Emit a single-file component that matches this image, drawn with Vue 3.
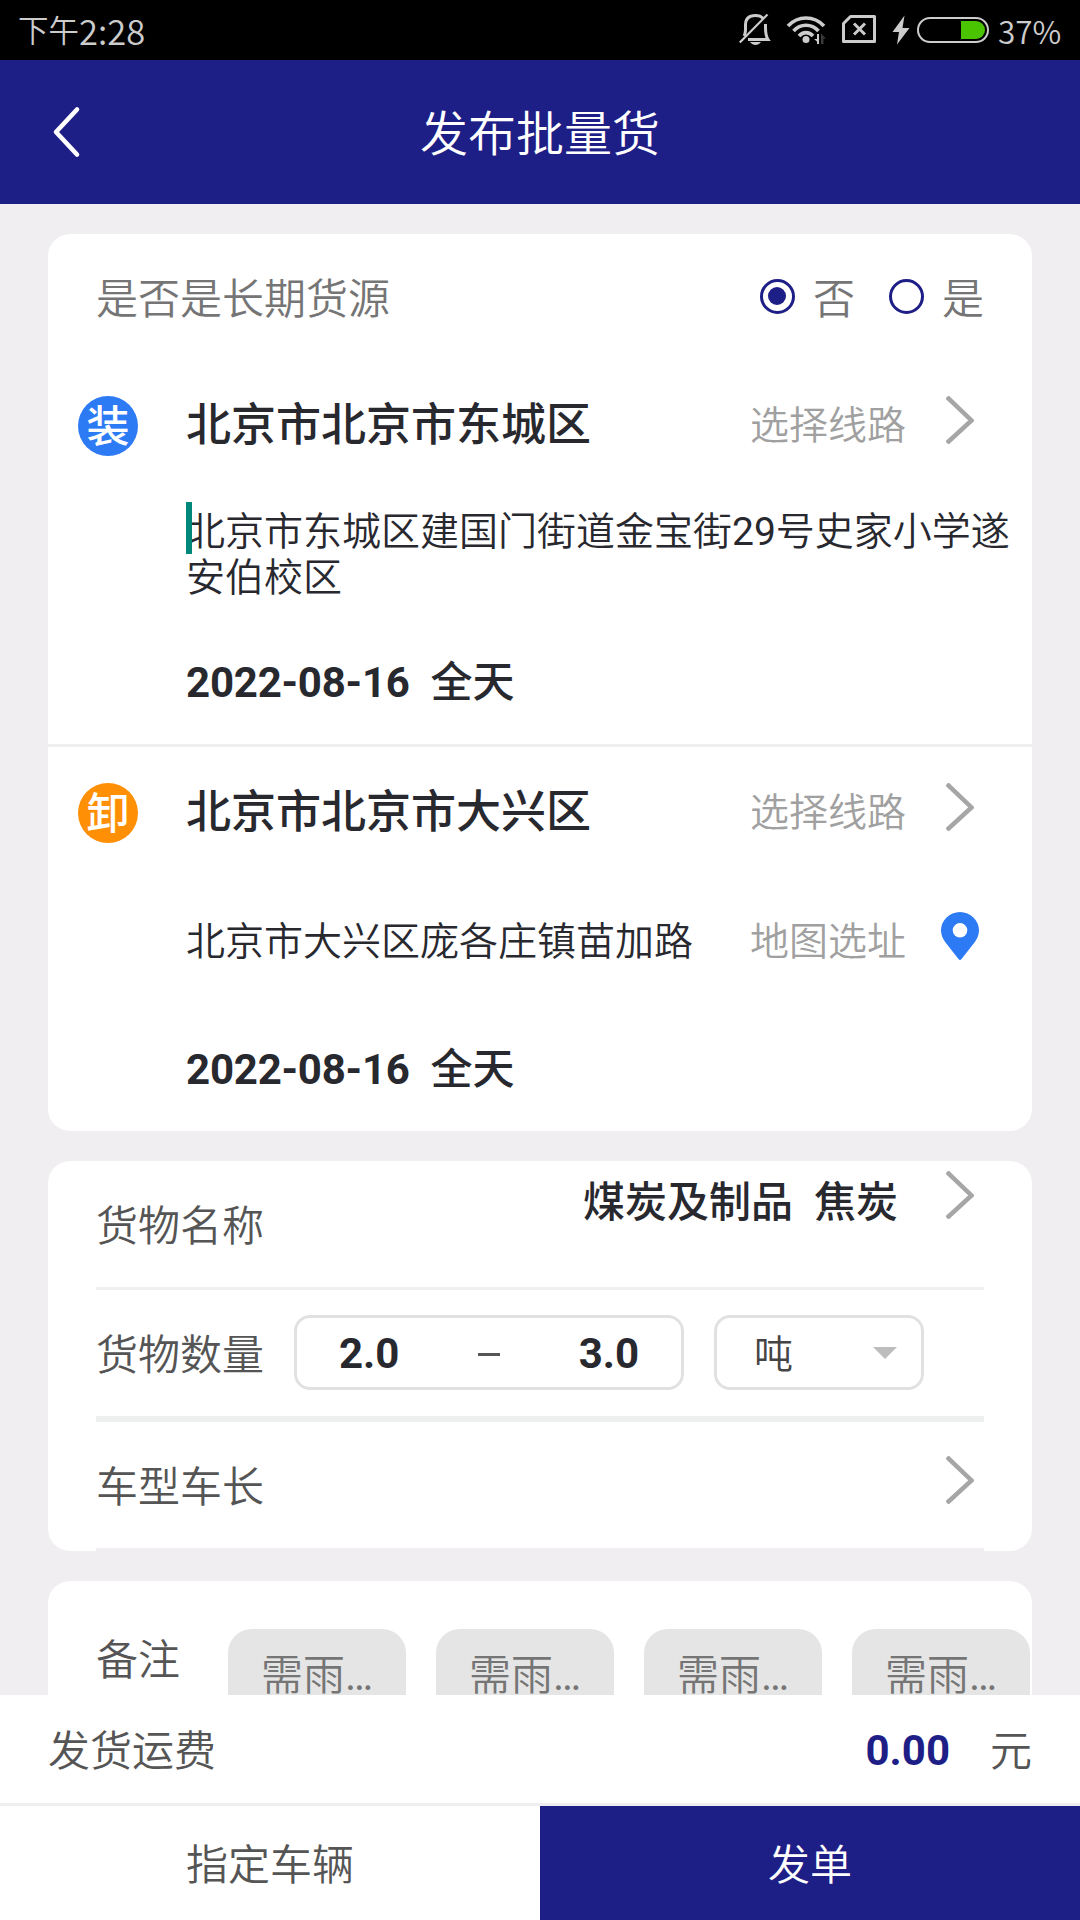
<template>
    <div class="page">
        <div class="status-bar">
            <div class="time"><span>下午</span><span class="digits">2:28</span></div>
            <svg class="status-icons" width="256" height="60" viewBox="736 0 256 60" fill="none">
                <g stroke="#cccccc" stroke-width="3">
                    <path d="M744 36 C746 33 745.500 29 745.500 25 C745.500 19 749 15.500 755.500 15.500 C759 15.500 761.500 16.500 763 18.500" />
                    <path d="M765.500 24 C765.500 31 765 35 768 39.500 H748" />
                    <path d="M739.800 42.500 L767.500 14.500" stroke-width="2.200" />
                </g>
                <path d="M750 42 H761 C759.500 44 757.500 45 755.500 45 C753.500 45 751.500 44 750 42 Z" fill="#cccccc" />
                <g stroke="#cccccc" stroke-width="3.600">
                    <path d="M788 26 C798 15.300 814 15.300 824 26" />
                    <path d="M793.500 31 C800.500 23.300 811.500 23.300 818.500 31" />
                    <path d="M799 36 C803 31.500 809 31.500 813 36" />
                </g>
                <circle cx="806" cy="39.500" r="3.500" fill="#cccccc" />
                <path d="M819 34 V44 H817 V41.500 L814 39 H817 V34 Z" fill="#cccccc" />
                <path d="M821 44 V33.500 L826 38.500 H823.500 V44 Z" fill="#383838" />
                <path d="M850.500 16.500 H874.500 V41.500 H843.500 V23.500 Z" stroke="#cccccc" stroke-width="3" stroke-linejoin="round" />
                <path d="M854 23.500 L865 34.500 M865 23.500 L854 34.500" stroke="#cccccc" stroke-width="3" />
                <path d="M904.500 15.500 L892.500 32 H899 L897 44.500 L909.500 28 H902.500 Z" fill="#cccccc" />
                <rect x="918" y="18" width="70" height="24" rx="12" stroke="#cccccc" stroke-width="2" />
                <path d="M961 21 H976 A9 9 0 0 1 976 39 H961 Z" fill="#4ac400" />
            </svg>
            <span class="digits percent">37%</span>
        </div>

        <header class="nav">
            <svg class="back" width="30" height="52" viewBox="0 0 30 52">
                <path d="M25 3.500 L4 26 L25 48.500" fill="none" stroke="#fff" stroke-width="4.600" stroke-linecap="round" stroke-linejoin="round" />
            </svg>
            <h1>发布批量货</h1>
        </header>

        <main class="content">
            <section class="card">
                <div class="long-term">
                    <span class="long-label">是否是长期货源</span>
                    <label v-for="item in options" :key="item" class="option" @click="longTerm = item">
                        <i class="radio" :class="{ checked: longTerm === item }"></i>
                        <span>{{ item }}</span>
                    </label>
                </div>

                <div v-for="stop in stops" :key="stop.tag" class="stop">
                    <div class="stop-head">
                        <span class="tag" :class="stop.type">{{ stop.tag }}</span>
                        <span class="region">{{ stop.region }}</span>
                        <span class="link">选择线路</span>
                        <svg class="arrow" width="28" height="48" viewBox="0 0 28 48">
                            <path d="M1 1 L25.500 24.500 L1 47" />
                        </svg>
                    </div>
                    <div class="stop-address">
                        <p class="address">
                            <i v-if="stop.focused" class="caret"></i><span v-for="(part, i) in splitNumbers(stop.address)" :key="i" :class="{ number: i % 2 }">{{ part }}</span>
                        </p>
                        <template v-if="stop.showMap">
                            <span class="link">地图选址</span>
                            <svg class="pin" width="38" height="48" viewBox="0 0 38 48">
                                <path fill="#2d7bf4" fill-rule="evenodd" d="M19 0 C29.500 0 38 8.300 38 18.500 C38 23 36 27 33.500 30.500 L20.500 47 Q19 49 17.500 47 L4.500 30.500 C2 27 0 23 0 18.500 C0 8.300 8.500 0 19 0 Z M19 11 A7.300 7.300 0 1 0 19 25.600 A7.300 7.300 0 1 0 19 11 Z" />
                            </svg>
                        </template>
                    </div>
                    <div class="stop-date"><b>{{ stop.date }}</b>{{ '  ' + stop.period }}</div>
                </div>
            </section>

            <section class="card goods">
                <div class="row">
                    <span class="label">货物名称</span>
                    <div class="goods-name">
                        <span>{{ '煤炭及制品  焦炭' }}</span>
                        <svg class="arrow" width="28" height="48" viewBox="0 0 28 48">
                            <path d="M1 1 L25.500 24.500 L1 47" />
                        </svg>
                    </div>
                </div>
                <div class="row amount-row">
                    <span class="label">货物数量</span>
                    <div class="range">
                        <b>2.0</b>
                        <i class="dash"></i>
                        <b>3.0</b>
                    </div>
                    <div class="unit">
                        <span>吨</span>
                        <i class="triangle"></i>
                    </div>
                </div>
                <div class="row truck-row">
                    <span class="label">车型车长</span>
                    <svg class="arrow" width="28" height="48" viewBox="0 0 28 48">
                        <path d="M1 1 L25.500 24.500 L1 47" />
                    </svg>
                </div>
            </section>

            <section class="card remark">
                <span class="label">备注</span>
                <div class="chips">
                    <span v-for="n in 4" :key="n" class="chip">需雨<span class="number">…</span></span>
                </div>
            </section>
        </main>

        <footer class="footer">
            <div class="fee">
                <span>发货运费</span>
                <b>0.00</b>
                <span>元</span>
            </div>
            <div class="actions">
                <button class="btn">指定车辆</button>
                <button class="btn btn-primary">发单</button>
            </div>
        </footer>
    </div>
</template>

<script setup>
import { ref } from 'vue'

const options = ['否', '是']
const longTerm = ref('否')

const stops = [
    {
        tag: '装',
        type: 'load',
        region: '北京市北京市东城区',
        address: '北京市东城区建国门街道金宝街29号史家小学遂安伯校区',
        date: '2022-08-16',
        period: '全天',
        focused: true,
        showMap: false
    },
    {
        tag: '卸',
        type: 'unload',
        region: '北京市北京市大兴区',
        address: '北京市大兴区庞各庄镇苗加路',
        date: '2022-08-16',
        period: '全天',
        focused: false,
        showMap: true
    }
]

// odd items are the numbers
const splitNumbers = (text) => text.split(/(\d+)/)
</script>

<style>
body {
    margin: 0;
    background: #f0eef1;
}
</style>

<style scoped>
.page {
    width: 1080px;
    height: 1920px;
    display: flex;
    flex-direction: column;
    overflow: hidden;
    background: #f0eef1;
    font-family: Roboto, 'Noto Sans CJK SC', sans-serif;
    font-size: 42px;
    font-weight: 350;
    line-height: 1.2;
    color: #555;
}

.page * {
    box-sizing: border-box;
}

.page svg {
    flex: none;
}

.status-bar {
    height: 60px;
    flex: none;
    background: #000;
    color: #ccc;
    display: flex;
    align-items: center;
    padding: 0 18px;
}

.time {
    flex: 1;
    display: flex;
    align-items: center;
    font-size: 30.5px;
    line-height: 60px;
}

.time span:first-child {
    padding-top: 3px;
}

.digits {
    font-family: 'Noto Sans CJK SC', sans-serif;
    font-size: 34.5px;
    line-height: 58px;
}

.percent {
    width: 64px;
    margin-left: 6px;
    font-size: 31.5px;
}

.nav {
    height: 144px;
    flex: none;
    background: #1e1e87;
    display: flex;
    align-items: center;
    padding: 0 84px 0 52px;
}

.nav h1 {
    flex: 1;
    margin: 0;
    padding: 6px 0 0 2px;
    text-align: center;
    font-size: 48px;
    font-weight: 350;
    color: #fff;
}

.content {
    flex: 1;
    min-height: 0;
    overflow: hidden;
    padding: 30px 48px 0;
    display: flex;
    flex-direction: column;
    gap: 30px;
}

.card {
    flex: none;
    background: #fff;
    border-radius: 22px;
}

.long-term {
    height: 126px;
    padding: 6px 48px 0 48px;
    display: flex;
    align-items: center;
    color: #757575;
}

.long-label {
    flex: 1;
}

.option {
    display: flex;
    align-items: center;
    gap: 18px;
    margin-left: 34px;
}

.radio {
    width: 35px;
    height: 35px;
    margin-bottom: 7px;
    border: 3.5px solid #1e1e87;
    border-radius: 50%;
    display: flex;
    align-items: center;
    justify-content: center;
}

.radio.checked::after {
    content: '';
    width: 18px;
    height: 18px;
    border-radius: 50%;
    background: #1e1e87;
}

.stop {
    height: 384px;
}

.stop + .stop {
    height: 387px;
    border-top: 3px solid #efefef;
}

.stop-head {
    height: 131px;
    padding: 36px 58px 0 30px;
    display: flex;
    align-items: flex-start;
    line-height: 60px;
}

.tag {
    width: 60px;
    height: 60px;
    border-radius: 50%;
    color: #fff;
    font-size: 43px;
    font-weight: 500;
    line-height: 62px;
    text-align: center;
}

.tag.load {
    background: #2d7bf4;
}

.tag.unload {
    background: #ff8f05;
}

.region {
    flex: 1;
    margin-left: 48px;
    font-size: 45px;
    font-weight: 500;
    color: #28282f;
}

.link {
    font-size: 39px;
    color: #a0a0a0;
}

.arrow {
    margin-left: 40px;
    fill: none;
    stroke: #a6a6a6;
    stroke-width: 4.5;
}

.stop-address {
    height: 128px;
    padding: 0 53px 0 138px;
    display: flex;
    align-items: center;
}

.stop:not(:last-child) .stop-address {
    padding-right: 15px;
}

.address {
    flex: 1;
    position: relative;
    margin: 0;
    font-size: 39px;
    line-height: 46px;
    color: #28282f;
}

.number {
    font-weight: 400;
}

.caret {
    position: absolute;
    left: 0;
    top: -7px;
    width: 6px;
    height: 52px;
    background: #00897b;
}

.pin {
    margin: 0 0 12px 35px;
}

.stop-date {
    height: 125px;
    padding: 2px 0 0 138px;
    line-height: 123px;
    font-weight: 500;
    color: #28282f;
    white-space: pre;
}

b {
    font-weight: 700;
}

.stop-date b {
    letter-spacing: -0.22px;
}

.goods {
    padding: 0 48px;
}

.row {
    height: 129px;
    padding-top: 6px;
    border-bottom: 3px solid #f0f0f0;
    display: flex;
    align-items: center;
}

.goods-name {
    flex: 1;
    align-self: flex-start;
    padding: 4px 10px 0 0;
    display: flex;
    justify-content: flex-end;
    line-height: 64px;
    font-weight: 500;
    color: #28282f;
    white-space: pre;
}

.goods-name .arrow {
    margin-left: 48px;
}

.amount-row {
    height: 132px;
    padding: 0 0 1px;
    border-bottom: 6px solid #eef0ef;
}

.amount-row .label {
    padding-top: 7px;
}

.range,
.unit {
    height: 75px;
    border: 3px solid #e0e2e1;
    border-radius: 16px;
    display: flex;
    align-items: center;
    justify-content: space-between;
}

.range {
    width: 390px;
    margin-left: 30px;
    padding: 4px 42px 0;
    color: #28282f;
}

.dash {
    width: 22px;
    height: 3px;
    background: #555;
}

.unit {
    width: 210px;
    margin-left: 30px;
    padding: 0 24px 0 37px;
    font-size: 39px;
    color: #444;
}

.unit span {
    padding-top: 5px;
}

.triangle {
    border: 12px solid transparent;
    border-top-color: #bdbdbd;
    border-bottom: none;
}

.truck-row {
    justify-content: space-between;
    padding-right: 10px;
    border-bottom-color: #f0eef1;
}

.truck-row .arrow {
    margin-bottom: 16px;
}

.remark {
    height: 300px;
    padding: 48px 0 0 48px;
    display: flex;
    align-items: flex-start;
}

.remark .label {
    line-height: 64px;
}

.chips {
    display: flex;
    gap: 30px;
    margin-left: 48px;
}

.chip {
    width: 178px;
    height: 96px;
    border-radius: 24px;
    background: #e5e5e5;
    color: #757575;
    line-height: 94px;
    text-align: center;
}

.footer {
    flex: none;
    height: 225px;
    background: #fff;
}

.fee {
    height: 111px;
    padding: 4px 48px 0;
    border-bottom: 3px solid #f0eef1;
    display: flex;
    align-items: center;
}

.fee span {
    padding-top: 2px;
}

.fee b {
    margin-left: auto;
    margin-right: 40px;
    color: #1e1e87;
}

.actions {
    height: 114px;
    display: flex;
}

.btn {
    flex: 1;
    padding: 6px 0 0;
    border: none;
    background: #fff;
    color: #555;
    font: inherit;
    cursor: pointer;
}

.btn-primary {
    background: #1e1e87;
    color: #fff;
}
</style>
